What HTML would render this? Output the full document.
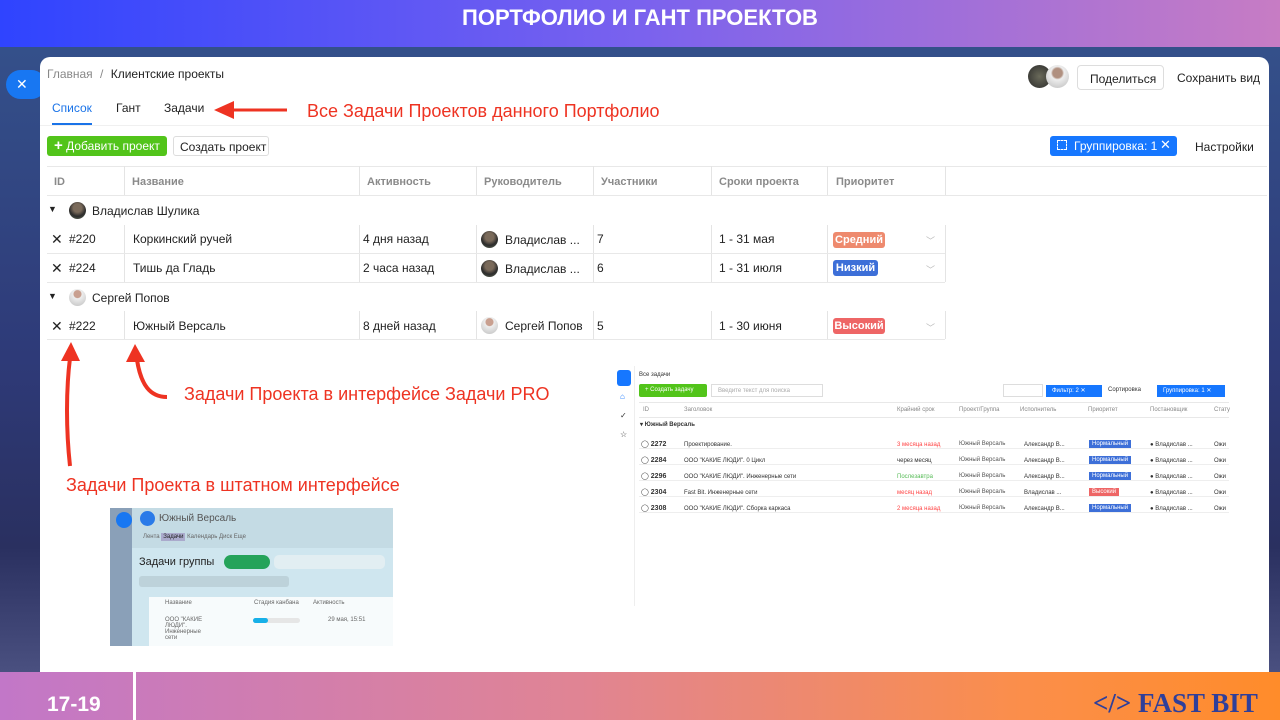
<!DOCTYPE html>
<html><head><meta charset="utf-8"><style>
*{margin:0;padding:0;box-sizing:border-box}
body{width:1280px;height:720px;overflow:hidden;position:relative;font-family:"Liberation Sans",sans-serif;background:#2e3d72}
.a{position:absolute}
.t{font-size:12px;color:#222;white-space:nowrap}
.hd{font-size:11px;color:#8a8a8a;font-weight:bold}
.vl{position:absolute;width:1px;background:#e4e4e4}
.hl{position:absolute;height:1px;background:#e8e8e8}
.av{position:absolute;width:17px;height:17px;border-radius:50%;background:radial-gradient(circle at 50% 35%,#7a6a5a 0 30%,#2b2b2b 60%,#6a7560)}
.av2{position:absolute;width:17px;height:17px;border-radius:50%;background:radial-gradient(circle at 50% 30%,#c9a090 0 25%,#eee 30%,#ccc 80%)}
.tag{position:absolute;height:16px;border-radius:3px;color:#fff;font-size:11px;font-weight:bold;padding:2px 0;text-align:center}
.red{color:#ee3322;font-size:18px;white-space:nowrap}
.s{font-size:6px;color:#333;white-space:nowrap}
</style></head><body>
<div class="a" style="left:0;top:0;width:1280px;height:47px;background:linear-gradient(90deg,#2f44ff,#7a62ee 50%,#c77cc4)"></div>
<div class="a" style="left:0;top:5px;width:1280px;text-align:center;color:#fff;font-weight:bold;font-size:22px">ПОРТФОЛИО И ГАНТ ПРОЕКТОВ</div>
<div class="a" style="left:0;top:47px;width:1280px;height:625px;background:linear-gradient(180deg,#34508a,#2e3a78 50%,#2a3060 80%,#4a5080)"></div>
<div class="a" style="left:6px;top:70px;width:40px;height:29px;border-radius:15px;background:#1877f2;color:#fff;font-size:14px;padding:6px 0 0 10px">✕</div>
<div class="a" style="left:40px;top:57px;width:1229px;height:615px;background:#fff;border-radius:10px 10px 0 0"></div>
<div class="a t" style="left:47px;top:67px;color:#888">Главная <span style="margin:0 4px">/</span> <span style="color:#222">Клиентские проекты</span></div>
<div class="a" style="left:1028px;top:65px;width:23px;height:23px;border-radius:50%;background:radial-gradient(circle,#6a6a5a,#2b2b2b)"></div>
<div class="a" style="left:1046px;top:65px;width:23px;height:23px;border-radius:50%;background:radial-gradient(circle at 50% 35%,#b09080 0 25%,#eee 35%,#bbb)"></div>
<div class="a t" style="left:1077px;top:65px;width:87px;height:25px;border:1px solid #ddd;border-radius:4px;padding:6px 0 0 12px;font-size:12px">Поделиться</div>
<div class="a t" style="left:1177px;top:71px">Сохранить вид</div>
<div class="a t" style="left:52px;top:101px;color:#1a73e8">Список</div>
<div class="a" style="left:52px;top:123px;width:40px;height:2px;background:#1a73e8"></div>
<div class="a t" style="left:116px;top:101px">Гант</div>
<div class="a t" style="left:164px;top:101px">Задачи</div>
<div class="hl" style="left:40px;top:125px;width:1229px;background:#f0f0f0"></div>
<svg class="a" style="left:212px;top:98px" width="75" height="24"><path d="M75 12H20" stroke="#ee3322" stroke-width="3"/><path d="M2 12L22 3V21Z" fill="#ee3322"/></svg>
<div class="a red" style="left:307px;top:101px">Все Задачи Проектов данного Портфолио</div>
<div class="a" style="left:47px;top:136px;width:120px;height:20px;background:#52c41a;border-radius:3px;color:#fff;font-size:12px;padding:3px 0 0 7px"><b style="font-size:15px;line-height:12px">+</b> Добавить проект</div>
<div class="a t" style="left:173px;top:136px;width:96px;height:20px;border:1px solid #ddd;border-radius:3px;padding:3px 0 0 6px">Создать проект</div>
<div class="a" style="left:1050px;top:136px;width:127px;height:20px;background:#1677ff;border-radius:3px;color:#fff;font-size:12px;padding:3px 0 0 24px">Группировка: 1 <span style="position:absolute;left:110px;top:1px;font-size:13px">✕</span></div>
<div class="a" style="left:1057px;top:140px;width:10px;height:10px;border:1.5px dashed #fff"></div>
<div class="a t" style="left:1195px;top:140px">Настройки</div>
<div class="hl" style="left:47px;top:166px;width:1220px"></div>
<div class="hl" style="left:47px;top:195px;width:1220px"></div>
<div class="vl" style="left:124px;top:166px;height:29px"></div>
<div class="vl" style="left:359px;top:166px;height:29px"></div>
<div class="vl" style="left:476px;top:166px;height:29px"></div>
<div class="vl" style="left:593px;top:166px;height:29px"></div>
<div class="vl" style="left:711px;top:166px;height:29px"></div>
<div class="vl" style="left:827px;top:166px;height:29px"></div>
<div class="vl" style="left:945px;top:166px;height:29px"></div>
<div class="a hd" style="left:54px;top:176px">ID</div>
<div class="a hd" style="left:132px;top:176px">Название</div>
<div class="a hd" style="left:367px;top:176px">Активность</div>
<div class="a hd" style="left:484px;top:176px">Руководитель</div>
<div class="a hd" style="left:601px;top:176px">Участники</div>
<div class="a hd" style="left:719px;top:176px">Сроки проекта</div>
<div class="a hd" style="left:836px;top:176px">Приоритет</div>
<div class="a t" style="left:48px;top:204px;font-size:9px">▼</div>
<div class="av" style="left:69px;top:202px"></div>
<div class="a t" style="left:92px;top:204px">Владислав Шулика</div>
<div class="vl" style="left:124px;top:225px;height:57px"></div>
<div class="vl" style="left:359px;top:225px;height:57px"></div>
<div class="vl" style="left:476px;top:225px;height:57px"></div>
<div class="vl" style="left:593px;top:225px;height:57px"></div>
<div class="vl" style="left:711px;top:225px;height:57px"></div>
<div class="vl" style="left:827px;top:225px;height:57px"></div>
<div class="vl" style="left:945px;top:225px;height:57px"></div>
<div class="hl" style="left:47px;top:253px;width:898px"></div>
<div class="hl" style="left:47px;top:282px;width:898px"></div>
<div class="a t" style="left:51px;top:231px;font-size:14px">✕</div>
<div class="a t" style="left:69px;top:232px">#220</div>
<div class="a t" style="left:133px;top:232px">Коркинский ручей</div>
<div class="a t" style="left:363px;top:232px">4 дня назад</div>
<div class="av" style="left:481px;top:231px"></div>
<div class="a t" style="left:505px;top:233px">Владислав ...</div>
<div class="a t" style="left:597px;top:232px">7</div>
<div class="a t" style="left:719px;top:232px">1 - 31 мая</div>
<div class="tag" style="left:833px;top:232px;width:52px;background:#ee8a6e">Средний</div>
<div class="a" style="left:926px;top:234px;color:#bbb;font-size:9px">﹀</div>
<div class="a t" style="left:51px;top:260px;font-size:14px">✕</div>
<div class="a t" style="left:69px;top:261px">#224</div>
<div class="a t" style="left:133px;top:261px">Тишь да Гладь</div>
<div class="a t" style="left:363px;top:261px">2 часа назад</div>
<div class="av" style="left:481px;top:260px"></div>
<div class="a t" style="left:505px;top:262px">Владислав ...</div>
<div class="a t" style="left:597px;top:261px">6</div>
<div class="a t" style="left:719px;top:261px">1 - 31 июля</div>
<div class="tag" style="left:833px;top:260px;width:45px;background:#3d6fd8">Низкий</div>
<div class="a" style="left:926px;top:263px;color:#bbb;font-size:9px">﹀</div>
<div class="a t" style="left:48px;top:291px;font-size:9px">▼</div>
<div class="av2" style="left:69px;top:289px"></div>
<div class="a t" style="left:92px;top:291px">Сергей Попов</div>
<div class="vl" style="left:124px;top:311px;height:28px"></div>
<div class="vl" style="left:359px;top:311px;height:28px"></div>
<div class="vl" style="left:476px;top:311px;height:28px"></div>
<div class="vl" style="left:593px;top:311px;height:28px"></div>
<div class="vl" style="left:711px;top:311px;height:28px"></div>
<div class="vl" style="left:827px;top:311px;height:28px"></div>
<div class="vl" style="left:945px;top:311px;height:28px"></div>
<div class="hl" style="left:47px;top:339px;width:898px"></div>
<div class="a t" style="left:51px;top:318px;font-size:14px">✕</div>
<div class="a t" style="left:69px;top:319px">#222</div>
<div class="a t" style="left:133px;top:319px">Южный Версаль</div>
<div class="a t" style="left:363px;top:319px">8 дней назад</div>
<div class="av2" style="left:481px;top:317px"></div>
<div class="a t" style="left:505px;top:319px">Сергей Попов</div>
<div class="a t" style="left:597px;top:319px">5</div>
<div class="a t" style="left:719px;top:319px">1 - 30 июня</div>
<div class="tag" style="left:833px;top:318px;width:52px;background:#ee6666">Высокий</div>
<div class="a" style="left:926px;top:321px;color:#bbb;font-size:9px">﹀</div>
<svg class="a" style="left:55px;top:340px" width="120" height="130"><path d="M15 126 C11 90,11 50,15 18" stroke="#ee3322" stroke-width="4" fill="none"/><path d="M16 2L25 21H6Z" fill="#ee3322"/><path d="M112 57 C95 57,86 45,82 20" stroke="#ee3322" stroke-width="4" fill="none"/><path d="M80 4L90 22H71Z" fill="#ee3322"/></svg>
<div class="a red" style="left:184px;top:384px">Задачи Проекта в интерфейсе Задачи PRO</div>
<div class="a red" style="left:66px;top:475px">Задачи Проекта в штатном интерфейсе</div>
<div class="a" style="left:110px;top:508px;width:283px;height:138px;background:#cfe6ef"></div>
<div class="a" style="left:110px;top:508px;width:22px;height:138px;background:#8aa0b8"></div>
<div class="a" style="left:116px;top:512px;width:16px;height:16px;border-radius:8px;background:#1877f2"></div>
<div class="a" style="left:132px;top:508px;width:261px;height:40px;background:#c4dbe4"></div>
<div class="a" style="left:140px;top:511px;width:15px;height:15px;border-radius:50%;background:#2a7ae8"></div>
<div class="a" style="left:159px;top:513px;font-size:10px;color:#555">Южный Версаль</div>
<div class="a s" style="left:143px;top:534px;color:#666">Лента <span style="background:#aac;padding:1px 2px;color:#222">Задачи</span> Календарь Диск Еще</div>
<div class="a" style="left:139px;top:556px;font-size:11px;color:#222">Задачи группы</div>
<div class="a" style="left:224px;top:555px;width:46px;height:14px;border-radius:7px;background:#25a35a"></div>
<div class="a" style="left:274px;top:555px;width:111px;height:14px;border-radius:5px;background:#e2eef2"></div>
<div class="a" style="left:139px;top:576px;width:150px;height:11px;background:#bdd2da;border-radius:3px"></div>
<div class="a" style="left:149px;top:597px;width:244px;height:49px;background:#f7fbfc"></div>
<div class="a s" style="left:165px;top:600px;color:#666">Название</div>
<div class="a s" style="left:254px;top:600px;color:#666">Стадия канбана</div>
<div class="a s" style="left:313px;top:600px;color:#666">Активность</div>
<div class="a s" style="left:165px;top:617px;color:#666">ООО "КАКИЕ<br>ЛЮДИ".<br>Инженерные<br>сети</div>
<div class="a" style="left:253px;top:618px;width:47px;height:5px;background:#e6e6e6;border-radius:3px"><div style="width:15px;height:5px;background:#17b0e8;border-radius:3px"></div></div>
<div class="a s" style="left:328px;top:617px;color:#666">29 мая, 15:51</div>
<div class="vl" style="left:634px;top:366px;height:240px;background:#eee"></div>
<div class="a" style="left:617px;top:370px;width:14px;height:16px;background:#1677ff;border-radius:3px"></div>
<div class="a s" style="left:620px;top:392px;color:#1677ff;font-size:8px">⌂</div>
<div class="a s" style="left:620px;top:411px;font-size:8px">✓</div>
<div class="a s" style="left:620px;top:430px;font-size:8px">☆</div>
<div class="a s" style="left:639px;top:372px">Все задачи</div>
<div class="a s" style="left:639px;top:384px;width:68px;height:13px;background:#52c41a;border-radius:2px;color:#fff;padding:3px 0 0 6px">+ Создать задачу</div>
<div class="a s" style="left:711px;top:384px;width:112px;height:13px;border:1px solid #ddd;color:#aaa;padding:3px 0 0 6px">Введите текст для поиска</div>
<div class="a" style="left:1003px;top:384px;width:40px;height:13px;border:1px solid #ddd"></div>
<div class="a s" style="left:1046px;top:385px;width:56px;height:12px;background:#1677ff;color:#fff;padding:2px 0 0 6px">Фильтр: 2 ✕</div>
<div class="a s" style="left:1108px;top:387px">Сортировка</div>
<div class="a s" style="left:1157px;top:385px;width:68px;height:12px;background:#1677ff;color:#fff;padding:2px 0 0 6px">Группировка: 1 ✕</div>
<div class="hl" style="left:639px;top:402px;width:590px"></div>
<div class="a s" style="left:643px;top:407px;color:#888">ID</div>
<div class="a s" style="left:684px;top:407px;color:#888">Заголовок</div>
<div class="a s" style="left:897px;top:407px;color:#888">Крайний срок</div>
<div class="a s" style="left:959px;top:407px;color:#888">Проект/Группа</div>
<div class="a s" style="left:1020px;top:407px;color:#888">Исполнитель</div>
<div class="a s" style="left:1088px;top:407px;color:#888">Приоритет</div>
<div class="a s" style="left:1150px;top:407px;color:#888">Постановщик</div>
<div class="a s" style="left:1214px;top:407px;color:#888">Стату</div>
<div class="hl" style="left:639px;top:417px;width:590px"></div>
<div class="a s" style="left:640px;top:421px;font-weight:bold">▾ Южный Версаль</div>
<div class="a" style="left:639px;top:433px;width:590px;height:80px;background:repeating-linear-gradient(180deg,#fff 0 15px,#eee 15px 16px)"></div>
<div class="a s" style="left:641px;top:437px;line-height:16px;font-size:7px">◯ <b>2272</b><br>◯ <b>2284</b><br>◯ <b>2296</b><br>◯ <b>2304</b><br>◯ <b>2308</b></div>
<div class="a s" style="left:684px;top:437px;line-height:16px">Проектирование.<br>ООО "КАКИЕ ЛЮДИ". 0 Цикл<br>ООО "КАКИЕ ЛЮДИ". Инженерные сети<br>Fast Bit. Инженерные сети<br>ООО "КАКИЕ ЛЮДИ". Сборка каркаса</div>
<div class="a s" style="left:897px;top:437px;line-height:16px"><span style="color:#f44">3 месяца назад</span><br>через месяц<br><span style="color:#5b5">Послезавтра</span><br><span style="color:#f44">месяц назад</span><br><span style="color:#f44">2 месяца назад</span></div>
<div class="a s" style="left:959px;top:436px;line-height:16px;color:#555">Южный Версаль<br>Южный Версаль<br>Южный Версаль<br>Южный Версаль<br>Южный Версаль</div>
<div class="a s" style="left:1024px;top:437px;line-height:16px">Александр В...<br>Александр В...<br>Александр В...<br>Владислав ...<br>Александр В...</div>
<div class="a s" style="left:1089px;top:436px;line-height:16px;color:#fff"><span style="background:#3d6fd8;padding:1px 3px">Нормальный</span><br><span style="background:#3d6fd8;padding:1px 3px">Нормальный</span><br><span style="background:#3d6fd8;padding:1px 3px">Нормальный</span><br><span style="background:#e66;padding:1px 3px">Высокий</span><br><span style="background:#3d6fd8;padding:1px 3px">Нормальный</span></div>
<div class="a s" style="left:1150px;top:437px;line-height:16px">● Владислав ...<br>● Владислав ...<br>● Владислав ...<br>● Владислав ...<br>● Владислав ...</div>
<div class="a s" style="left:1214px;top:437px;line-height:16px">Ожи<br>Ожи<br>Ожи<br>Ожи<br>Ожи</div>
<div class="a" style="left:0;top:672px;width:1280px;height:48px;background:linear-gradient(90deg,#c277c8,#e08494 45%,#fb8e4a 80%,#ff8c2a)"></div>
<div class="a" style="left:133px;top:672px;width:3px;height:48px;background:#fff"></div>
<div class="a" style="left:47px;top:693px;color:#fff;font-weight:bold;font-size:21px">17-19</div>
<div class="a" style="left:1093px;top:688px;color:#2f3f9a;font-weight:bold;font-size:27px;font-family:'Liberation Serif',serif">&lt;/&gt; FAST BIT</div>
</body></html>
